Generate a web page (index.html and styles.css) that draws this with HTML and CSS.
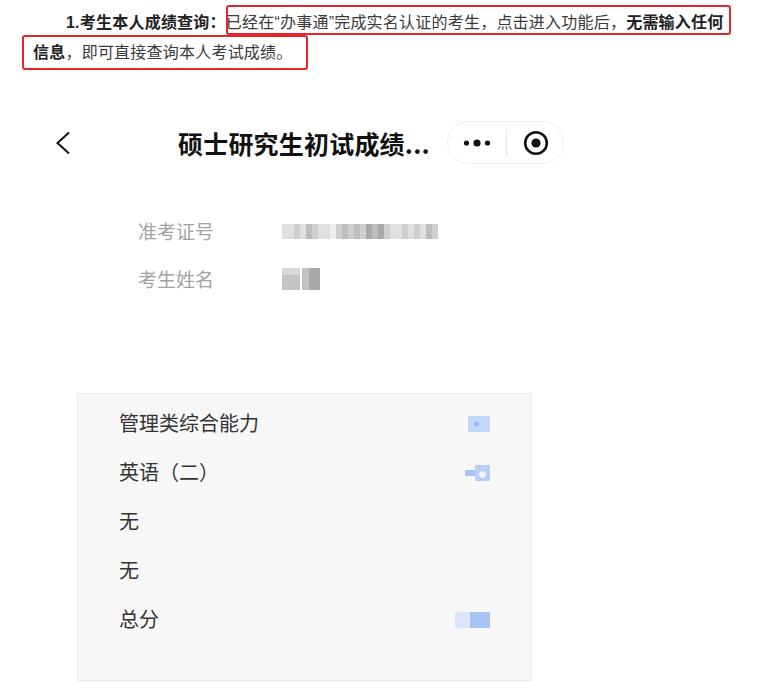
FILE: index.html
```html
<!DOCTYPE html>
<html lang="zh-CN">
<head>
<meta charset="utf-8">
<title>硕士研究生初试成绩</title>
<link rel="stylesheet" href="styles.css">
</head>
<body>
  <div class="intro">
    <p><b>1.考生本人成绩查询：</b>已经在“办事通”完成实名认证的考生，点击进入功能后，<b>无需输入任何信息</b>，即可直接查询本人考试成绩。</p>
    <div class="mark mark-1"></div>
    <div class="mark mark-2"></div>
  </div>

  <div class="nav">
    <svg class="back" width="20" height="24" viewBox="0 0 20 24"><polyline points="17,1.5 5.5,12 17,22.5" fill="none" stroke="#111" stroke-width="2"/></svg>
    <div class="title">硕士研究生初试成绩...</div>
    <div class="capsule">
      <svg class="dots" width="28" height="10" viewBox="0 0 28 10"><circle cx="3.5" cy="5" r="2.6" fill="#111"/><circle cx="14" cy="5" r="3.6" fill="#111"/><circle cx="24.5" cy="5" r="2.6" fill="#111"/></svg>
      <span class="divider"></span>
      <svg class="target" width="26" height="26" viewBox="0 0 26 26"><circle cx="13" cy="13" r="10.8" fill="none" stroke="#111" stroke-width="2.6"/><circle cx="13" cy="13" r="4.6" fill="#111"/></svg>
    </div>
  </div>

  <div class="info">
    <div class="info-row">
      <span class="label">准考证号</span>
      <span class="mosaic">
        <i class="g1"></i><i class="g1"></i><i class="g2"></i><i class="g1"></i><i class="g3"></i><i class="g2"></i><i class="g1"></i><i class="g1"></i><i class="w"></i><i class="g2"></i><i class="g3"></i><i class="g2"></i><i class="g3"></i><i class="g2"></i><i class="g4"></i><i class="g3"></i><i class="g4"></i><i class="g2"></i><i class="g1"></i><i class="g1"></i><i class="g2"></i><i class="g1"></i><i class="g2"></i><i class="g1"></i><i class="g3"></i><i class="g2"></i>
      </span>
    </div>
    <div class="info-row">
      <span class="label">考生姓名</span>
      <span class="name-mosaic"><i class="n1"></i><i class="n2"></i></span>
    </div>
  </div>

  <div class="card">
    <div class="score-row"><span>管理类综合能力</span><span class="blue b1"></span></div>
    <div class="score-row"><span>英语（二）</span><span class="blue b2"><i></i><i></i></span></div>
    <div class="score-row"><span>无</span></div>
    <div class="score-row"><span>无</span></div>
    <div class="score-row"><span>总分</span><span class="blue b3"><i></i><i></i></span></div>
  </div>
</body>
</html>
```

FILE: styles.css
```css
html, body {
  margin: 0;
  padding: 0;
  background: #fff;
}

body {
  width: 778px;
  font-family: "Noto Sans CJK SC", sans-serif;
  color: #333;
}

.intro {
  position: relative;
  padding: 8px 0 0 33px;
  width: 698px;
  font-family: "Liberation Sans", "Noto Sans CJK SC", sans-serif;
  font-size: 16px;
  line-height: 30px;
  letter-spacing: 0.22px;
  color: #3a3a3a;
}

.intro p {
  margin: 0;
  text-indent: 33px;
}

.intro b {
  color: #222;
}

.mark {
  position: absolute;
  border: 2.5px solid #e2262b;
  border-radius: 3px;
  box-sizing: border-box;
}

.mark-1 {
  left: 226px;
  top: 5px;
  width: 505px;
  height: 30px;
}

.mark-2 {
  left: 22px;
  top: 35px;
  width: 286px;
  height: 35px;
}

.nav {
  display: flex;
  align-items: center;
  margin-top: 53px;
  height: 43px;
}

.back {
  margin-left: 52px;
  flex: none;
}

.title {
  margin-left: 106px;
  width: 250px;
  flex: none;
  font-size: 25px;
  font-weight: bold;
  color: #111;
  white-space: nowrap;
  letter-spacing: 0.2px;
}

.capsule {
  margin-left: 19px;
  width: 117px;
  height: 43px;
  box-sizing: border-box;
  border: 1px solid #efefef;
  border-radius: 22px;
  display: flex;
  align-items: center;
  flex: none;
}

.dots {
  margin-left: 15px;
  flex: none;
}

.divider {
  margin-left: 15px;
  width: 1px;
  height: 26px;
  background: #e6e6e6;
  flex: none;
}

.target {
  margin-left: 16px;
  flex: none;
}

.info {
  margin-top: 42px;
}

.info-row {
  display: flex;
  align-items: center;
  height: 48px;
  padding-left: 138px;
}

.label {
  width: 144px;
  font-size: 19px;
  color: #a3a3a3;
  flex: none;
}

.mosaic {
  display: flex;
  height: 15px;
  margin-top: 2px;
  filter: blur(0.6px);
}

.mosaic i,
.name-mosaic i {
  display: block;
  width: 6px;
  height: 100%;
}

.g1 { background: #e0e0e0; }
.g2 { background: #cfcfcf; }
.g3 { background: #bdbdbd; }
.g4 { background: #a9a9a9; }
.w { background: #f0f0f0; }

.name-mosaic {
  display: flex;
  gap: 2px;
  height: 22px;
  margin-top: 2px;
  filter: blur(0.6px);
}

.name-mosaic i.n1 {
  width: 18px;
  background: linear-gradient(#d8d8d8 0 30%, #c4c4c4 30% 100%);
}

.name-mosaic i.n2 {
  width: 18px;
  background: linear-gradient(90deg, #c2c2c2 0 40%, #a9a9a9 40% 100%);
}

.card {
  margin: 91px 0 0 77px;
  width: 455px;
  height: 288px;
  box-sizing: border-box;
  padding: 4px 41px 0 41px;
  background: #f7f7f7;
  border: 1px solid #ebebeb;
}

.score-row {
  display: flex;
  align-items: center;
  justify-content: space-between;
  height: 49px;
  font-size: 20px;
  color: #333;
}

.blue {
  display: flex;
  height: 16px;
  margin-top: 2px;
  filter: blur(0.5px);
}

.b1 {
  width: 22px;
  background: radial-gradient(circle at 40% 50%, #9dbcf0 0 2px, #c3d7f7 3px);
}

.b2 i:first-child {
  width: 10px;
  height: 6px;
  margin-top: 5px;
  background: #a8c3ef;
}

.b2 i:last-child {
  width: 15px;
  background: radial-gradient(circle at 50% 60%, #eef3fc 0 3px, #b9d0f6 4px);
}

.b3 i:first-child {
  width: 15px;
  background: #dbe6fa;
}

.b3 i:last-child {
  width: 20px;
  background: #a6c3f4;
}
```
